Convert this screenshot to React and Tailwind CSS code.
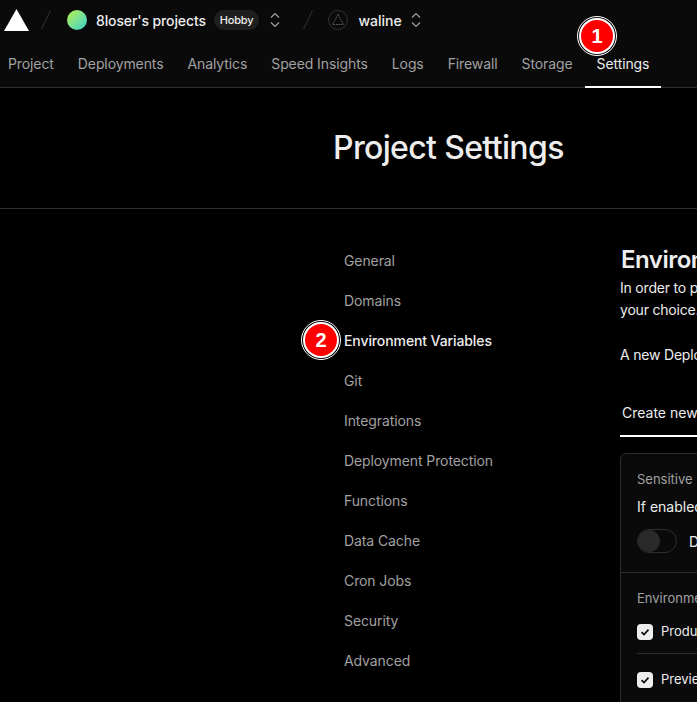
const tabs = ["Project", "Deployments", "Analytics", "Speed Insights", "Logs", "Firewall", "Storage", "Settings"];
const side = ["General", "Domains", "Environment Variables", "Git", "Integrations", "Deployment Protection", "Functions", "Data Cache", "Cron Jobs", "Security", "Advanced"];

function Slash() {
  return (
    <svg width="10" height="22" viewBox="0 0 10 22" className="shrink-0" fill="none">
      <path d="M9.5 1.5 0.5 20" stroke="#333" strokeWidth="1" />
    </svg>
  );
}

function Chevrons() {
  return (
    <svg width="12" height="16" viewBox="0 0 12 16" className="shrink-0" fill="none" stroke="#a1a1a1" strokeWidth="1.2">
      <path d="M2 5.5 6 1.5 10 5.5" />
      <path d="M2 10.5 6 14.5 10 10.5" />
    </svg>
  );
}

function Badge({ n, className }) {
  return (
    <div className={`absolute w-10 h-10 rounded-full border border-white p-px ${className}`}>
      <div className="w-full h-full rounded-full border-2 border-white bg-[#ff0000] flex items-center justify-center text-white font-bold text-[20px] font-['Liberation_Sans',sans-serif]">
        {n}
      </div>
    </div>
  );
}

function Check() {
  return (
    <div className="w-4 h-4 rounded-[4px] bg-[#ededed] flex items-center justify-center shrink-0">
      <svg width="12" height="12" viewBox="0 0 12 12" fill="none" stroke="#0a0a0a" strokeWidth="1.6">
        <path d="M2.5 6.2 5 8.6 9.5 3.6" />
      </svg>
    </div>
  );
}

export default function App() {
  return (
    <div className="relative w-[697px] h-[702px] overflow-hidden bg-black font-['Inter',sans-serif] text-[14px] text-[#a1a1a1]">
      <header className="h-[88px] bg-[#0a0a0a] border-b border-[#2e2e2e]">
        <div className="h-10 flex items-center pl-1">
          <svg width="25" height="22" viewBox="0 0 25 22" className="shrink-0"><path d="M12.5 0 25 22H0z" fill="#fff" /></svg>
          <div className="ml-3"><Slash /></div>
          <div className="ml-4 w-5 h-5 rounded-full bg-gradient-to-br from-[#b4f02c] to-[#1fd0c8]" />
          <span className="ml-[9px] font-medium text-[#ededed] tracking-[-0.12px]">8loser's projects</span>
          <span className="ml-2 h-5 px-[6px] rounded-full bg-[#1f1f1f] text-[#ededed] text-[11px] font-medium flex items-center tracking-[-0.2px]">Hobby</span>
          <div className="ml-[10px]"><Chevrons /></div>
          <div className="ml-[22px]"><Slash /></div>
          <svg width="20" height="20" viewBox="0 0 20 20" className="ml-[15px] shrink-0" fill="none" stroke="#666">
            <circle cx="10" cy="10" r="9.5" fill="#0a0a0a" stroke="#333" />
            <path d="M10 4.5 15.5 14.5H4.5z" strokeDasharray="1.5 1" />
          </svg>
          <span className="ml-[10px] font-medium text-[#ededed]">waline</span>
          <div className="ml-[8px]"><Chevrons /></div>
        </div>
        <nav className="flex h-12 -ml-1 tracking-[-0.1px]">
          {tabs.map((t) => (
            <div
              key={t}
              className={`px-3 h-12 flex items-center border-b-2 ${t === "Settings" ? "text-[#ededed] border-white" : "border-transparent"}`}
            >
              {t}
            </div>
          ))}
        </nav>
      </header>

      <div className="h-[121px] border-b border-[#2e2e2e] flex items-center pl-[333px]">
        <h1 className="text-[32px] font-medium text-[#ededed] tracking-[-0.65px] whitespace-nowrap">Project Settings</h1>
      </div>

      <div className="flex pl-[344px] pt-[31px]">
        <aside className="w-[276px] shrink-0 flex flex-col tracking-[-0.1px]">
          {side.map((s) => (
            <div key={s} className={`h-10 flex items-center ${s === "Environment Variables" ? "text-[#ededed] font-medium" : ""}`}>
              {s}
            </div>
          ))}
        </aside>
        <main className="w-[900px] shrink-0 text-[#ededed]">
          <h2 className="text-[24px] font-semibold leading-8 tracking-[-0.5px] whitespace-nowrap mt-[4px] ml-px">Environment Variables</h2>
          <p className="mt-[1px] leading-[22px] whitespace-nowrap tracking-[-0.2px]">
            In order to provide your Deployment with Environment Variables at Build and Runtime, you may enter them right here, for the Environment of<br />your choice.
          </p>
          <p className="mt-[23px] leading-[22px] whitespace-nowrap tracking-[-0.2px]">A new Deployment is required for your changes to take effect.</p>
          <div className="mt-[23px] flex h-[48px]">
            <div className="h-[48px] px-[2px] flex items-start pt-[13px] border-b-2 border-white w-[180px] whitespace-nowrap">Create new</div>
          </div>
          <div className="mt-[16px] w-[800px] rounded-t-md border border-[#2e2e2e] bg-[#0a0a0a]">
            <div className="px-4 pt-[16px] pb-[19px] border-b border-[#2e2e2e]">
              <div className="text-[13px] text-[#a1a1a1] leading-[18px]">Sensitive</div>
              <div className="mt-[9px] leading-5">If enabled, you and your team will not be able to read the values after creation.</div>
              <div className="mt-[12px] flex items-center gap-3">
                <div className="w-10 h-6 rounded-full border border-[#2e2e2e] bg-[#0a0a0a]">
                  <div className="w-[22px] h-[22px] rounded-full bg-[#2a2a2a]" />
                </div>
                <span>Disabled</span>
              </div>
            </div>
            <div className="px-4 pt-[16px]">
              <div className="text-[13px] text-[#a1a1a1] leading-[18px]">Environments</div>
              <div className="mt-[4px] h-[43px] flex items-center gap-2 border-b border-[#2e2e2e] text-[13px]"><Check />Production</div>
              <div className="h-[52px] flex items-center gap-2 text-[13px]"><Check />Preview</div>
            </div>
          </div>
        </main>
      </div>

      <Badge n="1" className="left-[577px] top-4" />
      <Badge n="2" className="left-[301px] top-[320px]" />
    </div>
  );
}
